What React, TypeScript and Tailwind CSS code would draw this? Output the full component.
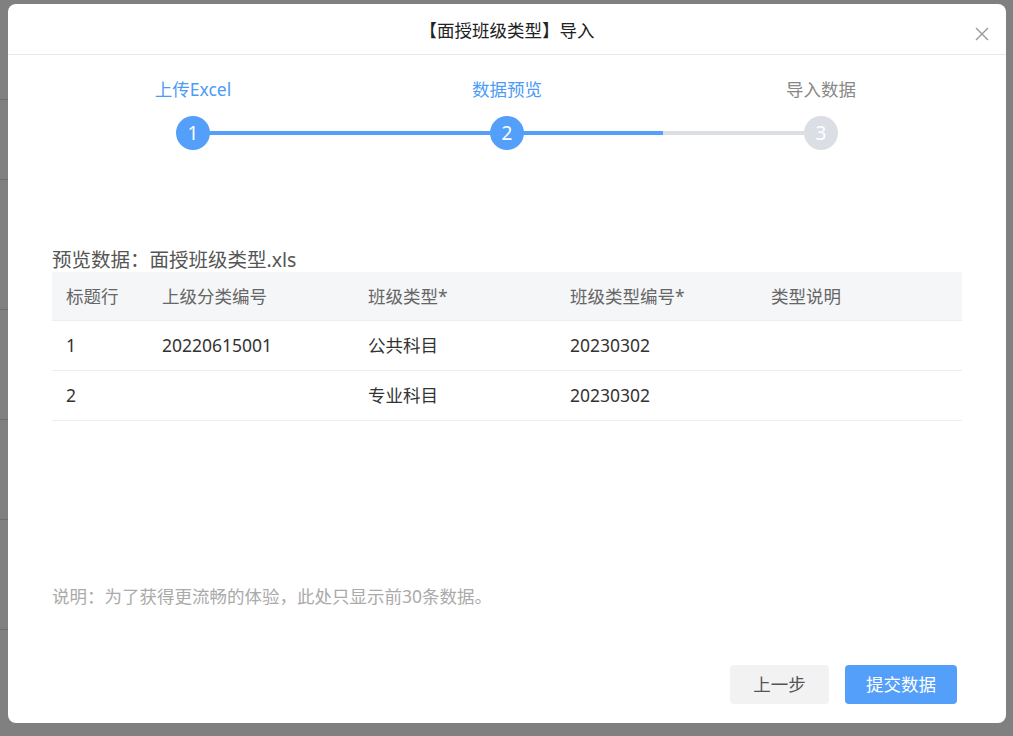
import React from "react";

const font = { fontFamily: '"Noto Sans", "Noto Sans CJK SC", sans-serif' };

const cols = [
  { title: "标题行", w: "w-[96px]" },
  { title: "上级分类编号", w: "w-[206px]" },
  { title: "班级类型*", w: "w-[202px]" },
  { title: "班级类型编号*", w: "w-[201px]" },
  { title: "类型说明", w: "flex-1" },
];

const rows = [
  ["1", "20220615001", "公共科目", "20230302", ""],
  ["2", "", "专业科目", "20230302", ""],
];

function Step({ n, label, active }: { n: number; label: string; active: boolean }) {
  return (
    <div className="flex flex-col items-center w-[120px]">
      <div className={`text-[17.5px] leading-[22px] ${active ? "text-[#4c9bf7]" : "text-[#888]"}`}>{label}</div>
      <div
        className={`mt-[16px] w-[34px] h-[34px] rounded-full flex items-center justify-center text-[19px] text-white relative z-10 ${
          active ? "bg-[#539ffa]" : "bg-[#dcdee5]"
        }`}
      >
        {n}
      </div>
    </div>
  );
}

export default function App() {
  return (
    <div className="w-[1013px] h-[736px] bg-[#808080] relative overflow-hidden" style={font}>
      {/* faint background page hints */}
      <div className="absolute left-0 top-0 w-[8px] h-full flex flex-col">
        <div className="h-[100px] border-b border-[#6e6e6e]" />
        <div className="h-[80px] border-b border-[#6e6e6e]" />
        <div className="h-[130px] border-b border-[#6e6e6e]" />
        <div className="h-[110px] border-b border-[#6e6e6e]" />
        <div className="h-[100px] border-b border-[#6e6e6e]" />
        <div className="h-[110px] border-b border-[#6e6e6e]" />
      </div>
      <div className="absolute left-[8px] top-[4px] w-[998px] h-[719px] bg-white rounded-[8px] flex flex-col">
        {/* header */}
        <div className="h-[51px] border-b border-[#e8e8e8] flex items-center justify-center relative shrink-0">
          <span className="text-[17.5px] text-[#222] mt-[3px]">【面授班级类型】导入</span>
          <svg className="absolute right-[17px] top-[23px]" width="14" height="14" viewBox="0 0 14 14">
            <path d="M1 1L13 13M13 1L1 13" stroke="#999" strokeWidth="1.4" />
          </svg>
        </div>

        {/* steps */}
        <div className="relative mt-[23px] h-[76px] flex justify-between px-[125px]">
          <div className="absolute left-[185px] top-[53px] w-[470px] h-[4px] bg-[#539ffa]" />
          <div className="absolute left-[655px] top-[53px] w-[157px] h-[4px] bg-[#dcdee5]" />
          <Step n={1} label="上传Excel" active />
          <Step n={2} label="数据预览" active />
          <Step n={3} label="导入数据" active={false} />
        </div>

        {/* preview */}
        <div className="mt-[94px] px-[44px]">
          <div className="text-[19.5px] leading-[24px] text-[#555]">预览数据：面授班级类型.xls</div>
          <div className="w-[910px] text-[17.5px]">
            <div className="flex h-[49px] bg-[#f5f6f8] border-b border-[#ebeef5] items-center text-[#666]">
              {cols.map((c, i) => (
                <div key={i} className={`${c.w} pl-[14px] shrink-0`}>
                  {c.title}
                </div>
              ))}
            </div>
            {rows.map((r, ri) => (
              <div key={ri} className="flex h-[50px] border-b border-[#ebeef5] items-center text-[#333]">
                {r.map((v, i) => (
                  <div key={i} className={`${cols[i].w} pl-[14px] shrink-0`}>
                    {v}
                  </div>
                ))}
              </div>
            ))}
          </div>
        </div>

        <div className="mt-[162px] px-[44px] text-[17.5px] text-[#aaa]">说明：为了获得更流畅的体验，此处只显示前30条数据。</div>

        <div className="flex-1" />
        <div className="flex justify-end gap-[16px] pr-[49px] pb-[19px]">
          <button className="w-[99px] h-[39px] rounded-[4px] bg-[#f2f2f2] text-[#555] text-[17.5px]">上一步</button>
          <button className="w-[112px] h-[39px] rounded-[4px] bg-[#539ffa] text-white text-[17.5px]">提交数据</button>
        </div>
      </div>
    </div>
  );
}
